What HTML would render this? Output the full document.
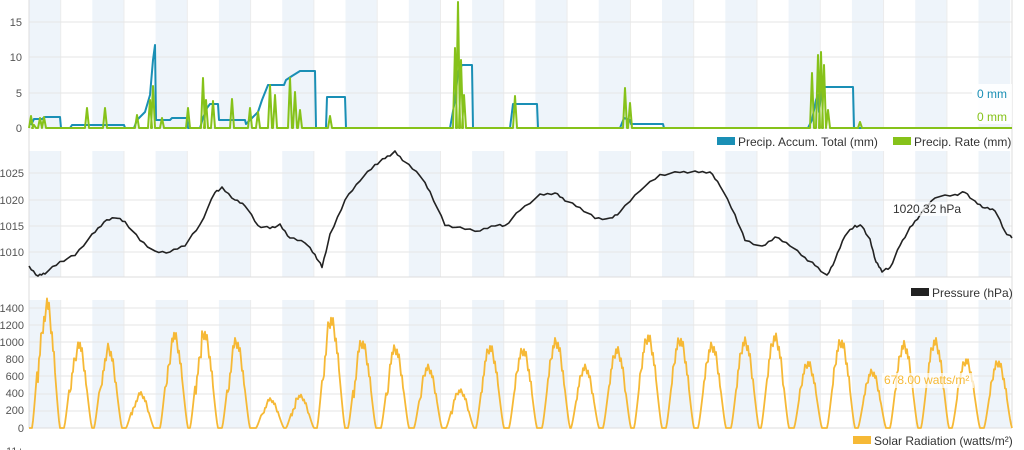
<!DOCTYPE html>
<html><head><meta charset="utf-8"><style>
body{margin:0;background:#fff;width:1024px;height:450px;overflow:hidden;font-family:"Liberation Sans",sans-serif}
svg{position:absolute;left:0;top:0}
</style></head><body>
<svg id="s" width="1024" height="450" xmlns="http://www.w3.org/2000/svg" font-family="Liberation Sans, sans-serif">
<g id="bands"></g>
<g font-size="11" fill="#555" text-anchor="end">
<text x="22" y="26">15</text><text x="22" y="61">10</text><text x="22" y="97">5</text><text x="22" y="132">0</text>
<text x="24" y="177">1025</text><text x="24" y="204">1020</text><text x="24" y="230">1015</text><text x="24" y="256">1010</text>
<text x="24" y="312">1400</text><text x="24" y="329">1200</text><text x="24" y="346">1000</text><text x="24" y="363">800</text><text x="24" y="380">600</text><text x="24" y="397">400</text><text x="24" y="414">200</text><text x="24" y="432">0</text>
</g>
<g id="lines" fill="none" stroke-linejoin="round"></g>
<rect x="972" y="84" width="40" height="40" fill="#fff" opacity="0.85"/>
<text x="1007" y="98" font-size="12" fill="#1a8fb5" text-anchor="end">0 mm</text>
<text x="1007" y="121" font-size="12" fill="#86c21a" text-anchor="end">0 mm</text>
<g font-size="12" fill="#333">
<rect x="717" y="137" width="18" height="8" fill="#1a8fb5"/><text x="738" y="146">Precip. Accum. Total (mm)</text>
<rect x="893" y="137" width="18" height="8" fill="#86c21a"/><text x="914" y="146">Precip. Rate (mm)</text>
<rect x="911" y="288" width="18" height="8" fill="#222"/><text x="932" y="297">Pressure (hPa)</text>
<rect x="853" y="436" width="18" height="8" fill="#f6b936"/><text x="874" y="445">Solar Radiation (watts/m²)</text>
</g>
<rect x="892" y="202" width="60" height="14" fill="#fff" opacity="0.7"/>
<text x="893" y="213" font-size="12" fill="#333">1020.32 hPa</text>
<rect x="882" y="373" width="92" height="15" fill="#fff" opacity="0.7"/>
<text x="884" y="384" font-size="12" fill="#f6b936">678.00 watts/m²</text>
<text x="6" y="455" font-size="11" fill="#555">11+</text>
</svg>
<script>
var NS="http://www.w3.org/2000/svg",b=document.getElementById('bands'),L=document.getElementById('lines');
function el(p,t,a){var e=document.createElementNS(NS,t);for(var k in a)e.setAttribute(k,a[k]);p.appendChild(e);return e}
var charts=[[0,128],[151,277],[300,428]];
charts.forEach(function(c){
 for(var i=0;i<16;i++){var x=29+i*63.3;el(b,'rect',{x:x,y:c[0],width:31.7,height:c[1]-c[0],fill:'#eef4fa'});}
 for(var i=1;i<16;i++){var x=29+i*63.3-31.6;el(b,'line',{x1:x,x2:x,y1:c[0],y2:c[1],stroke:'#ececec'});}
 el(b,'line',{x1:29,x2:1012,y1:c[1],y2:c[1],stroke:'#ddd'});
});
[22,57,93].forEach(function(y){el(b,'line',{x1:29,x2:1012,y1:y,y2:y,stroke:'#e6e6e6'})});
[173,200,226,252].forEach(function(y){el(b,'line',{x1:29,x2:1012,y1:y,y2:y,stroke:'#e6e6e6'})});
[308,325,342,359,376,394,411].forEach(function(y){el(b,'line',{x1:29,x2:1012,y1:y,y2:y,stroke:'#e6e6e6'})});
el(b,'line',{x1:29,x2:29,y1:0,y2:428,stroke:'#ddd'});
el(b,'line',{x1:1012,x2:1012,y1:0,y2:428,stroke:'#ddd'});
// precip accum
var blue="31,125 34,119 42,119 45,117 60,117 61,128 70,128 72,125 124,125 125,128 134,128 137,120 145,112 150,95 153,60 155,45 156,120 170,120 172,118 187,118 188,128 200,128 203,118 207,108 210,104 218,104 219,120 245,120 246,124 250,120 258,112 262,100 268,85 284,85 286,80 292,76 300,71 315,71 316,128 326,128 327,97 345,97 346,128 450,128 455,100 458,72 462,65 472,65 473,128 510,128 513,104 537,104 538,128 620,128 624,118 630,120 631,124 663,124 664,128 808,128 812,120 816,100 818,95 819,112 822,87 853,87 854,128 1012,128";
el(L,'polyline',{points:blue,stroke:'#1a8fb5','stroke-width':2});
var sp=[[31,116],[34,125],[40,118],[44,117],[87,108],[105,108],[137,115],[150,100],[153,86],[162,118],[188,108],[203,78],[206,100],[213,101],[232,99],[250,108],[258,112],[270,85],[275,95],[290,78],[295,92],[300,110],[330,116],[455,48],[458,2],[461,60],[464,95],[515,96],[625,88],[630,103],[812,73],[818,55],[821,52],[824,65],[828,110],[860,122]];
var g="29,128";sp.forEach(function(s){g+=" "+(s[0]-2)+",128 "+s[0]+","+s[1]+" "+(s[0]+2)+",128"});g+=" 1012,128";
el(L,'polyline',{points:g,stroke:'#86c21a','stroke-width':2});
// pressure
var pr=[[29,267],[38,276],[45,273],[60,262],[75,255],[92,235],[104,222],[115,217],[125,222],[140,240],[155,252],[170,252],[185,245],[200,225],[215,192],[222,188],[235,200],[245,205],[258,226],[270,228],[280,225],[290,238],[305,242],[315,255],[322,267],[330,235],[345,200],[360,180],[375,165],[385,158],[395,152],[405,162],[420,175],[430,192],[445,225],[460,228],[480,231],[495,225],[505,226],[520,210],[540,195],[555,193],[565,200],[580,208],[595,218],[610,219],[620,212],[640,190],[660,175],[680,172],[695,172],[710,172],[720,185],[735,215],[745,240],[762,247],[775,237],[790,245],[805,258],[815,265],[827,276],[835,260],[845,235],[855,226],[862,226],[870,240],[876,262],[882,271],[890,268],[900,245],[910,228],[920,215],[935,197],[955,195],[965,192],[975,202],[985,208],[995,210],[1005,232],[1012,238]];
var ps="";for(var i=0;i<pr.length-1;i++){for(var t=0;t<4;t++){var x=pr[i][0]+(pr[i+1][0]-pr[i][0])*t/4,y=pr[i][1]+(pr[i+1][1]-pr[i][1])*t/4+((i*7+t*3)%5-2)*0.5;ps+=x.toFixed(1)+","+y.toFixed(1)+" ";}}
ps+="1012,238";
el(L,'polyline',{points:ps,stroke:'#222','stroke-width':1.6});
// solar
var pk=[[46,1480],[78,1000],[108,930],[140,400],[174,1080],[204,1100],[236,1000],[270,330],[300,370],[331,1250],[362,990],[395,920],[428,700],[460,430],[490,930],[523,900],[556,1000],[585,700],[617,900],[648,1050],[680,1020],[712,950],[745,1000],[775,1050],[808,750],[841,1000],[872,650],[904,960],[935,1000],[966,780],[998,760]];
var sol="29,428";
pk.forEach(function(p,k){for(var dx=-14;dx<=14;dx+=1){var c=Math.cos(dx/14*Math.PI/2);var v=p[1]*Math.pow(Math.max(0,c),1.3);if(Math.abs(dx)<9)v+=((dx*13+k*7)%5-2)*p[1]*0.03;var y=428-v*0.0857;sol+=" "+(p[0]+dx)+","+y.toFixed(1);}});
sol+=" 1012,428";
el(L,'polyline',{points:sol,stroke:'#f6b936','stroke-width':1.8});
</script>
</body></html>
